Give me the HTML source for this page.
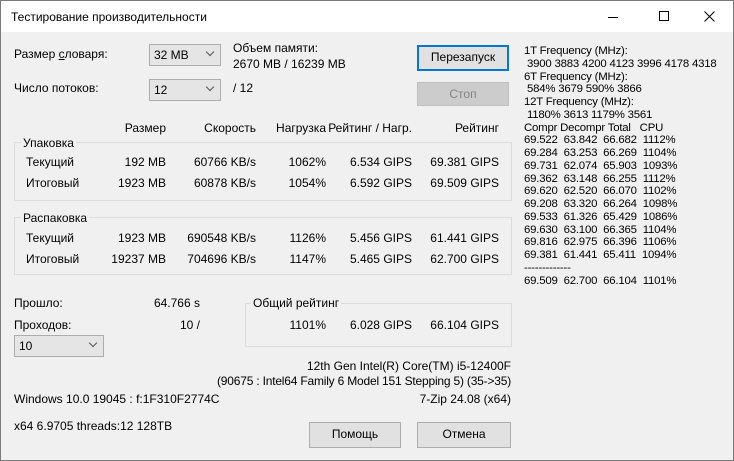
<!DOCTYPE html><html><head><meta charset="utf-8"><style>
*{margin:0;padding:0;box-sizing:border-box}
body{width:734px;height:461px;overflow:hidden;background:#f0f0f0;font-family:"Liberation Sans",sans-serif;font-size:12px;color:#000;position:relative}
.win{position:absolute;left:0;top:0;width:734px;height:461px;border:1px solid #7a7a7a}
.title{position:absolute;left:0;top:0;width:732px;height:31px;background:#fff}
.t{position:absolute;white-space:nowrap;line-height:14px}
.r{text-align:right}
.combo{position:absolute;background:#e5e5e5;border:1px solid #adadad;height:22px}
.combo span{position:absolute;left:4px;top:3px}
.combo i{position:absolute;right:7px;top:4px;width:6px;height:6px;border-right:1px solid #555;border-bottom:1px solid #555;transform:rotate(45deg)}
.btn{position:absolute;background:#e1e1e1;border:1px solid #adadad;text-align:center;line-height:23px}
.grp{position:absolute;border:1px solid #dcdcdc}
.gl{position:absolute;background:#f0f0f0;padding:0 2px;line-height:14px}
</style></head><body><div class="win">
<div class="title"><div class="t" style="left:10px;top:9px;font-size:12px">Тестирование производительности</div>
<div style="position:absolute;left:607px;top:16px;width:10px;height:1px;background:#000"></div>
<div style="position:absolute;left:658px;top:10px;width:10px;height:10px;border:1px solid #000"></div>
<svg style="position:absolute;left:703px;top:10px" width="11" height="11"><path d="M0.5 0.5L10.5 10.5M10.5 0.5L0.5 10.5" stroke="#000" stroke-width="1"/></svg></div>

<div class="t" style="left:13px;top:46px">Размер <u>с</u>ловаря:</div>
<div class="combo" style="left:148px;top:43px;width:72px"><span>32 MB</span><i></i></div>
<div class="t" style="left:232px;top:40px">Объем памяти:</div>
<div class="t" style="left:232px;top:56px">2670 MB / 16239 MB</div>
<div class="t" style="left:13px;top:80px">Число потоков:</div>
<div class="combo" style="left:148px;top:78px;width:72px"><span>12</span><i></i></div>
<div class="t" style="left:232px;top:80px">/ 12</div>
<div class="btn" style="left:416px;top:44px;width:92px;height:26px;border:2px solid #0078d7;line-height:21px">Перезапуск</div>
<div class="btn" style="left:416px;top:81px;width:92px;height:24px;background:#ccc;border-color:#bfbfbf;color:#838383">Стоп</div>

<div class="t r" style="left:95px;width:70px;top:120px">Размер</div>
<div class="t r" style="left:175px;width:80px;top:120px">Скорость</div>
<div class="t r" style="left:255px;width:70px;top:120px">Нагрузка</div>
<div class="t r" style="left:311px;width:100px;top:120px">Рейтинг / Нагр.</div>
<div class="t r" style="left:418px;width:80px;top:120px">Рейтинг</div>

<div class="grp" style="left:13px;top:141px;width:498px;height:59px"></div>
<div class="gl t" style="left:20px;top:135px">Упаковка</div>
<div class="t" style="left:25px;top:154px">Текущий</div>
<div class="t" style="left:25px;top:175px">Итоговый</div>
<div class="t r" style="left:95px;width:70px;top:154px">192 MB</div>
<div class="t r" style="left:95px;width:70px;top:175px">1923 MB</div>
<div class="t r" style="left:155px;width:100px;top:154px">60766 KB/s</div>
<div class="t r" style="left:155px;width:100px;top:175px">60878 KB/s</div>
<div class="t r" style="left:255px;width:70px;top:154px">1062%</div>
<div class="t r" style="left:255px;width:70px;top:175px">1054%</div>
<div class="t r" style="left:311px;width:100px;top:154px">6.534 GIPS</div>
<div class="t r" style="left:311px;width:100px;top:175px">6.592 GIPS</div>
<div class="t r" style="left:398px;width:100px;top:154px">69.381 GIPS</div>
<div class="t r" style="left:398px;width:100px;top:175px">69.509 GIPS</div>

<div class="grp" style="left:13px;top:216px;width:498px;height:58px"></div>
<div class="gl t" style="left:20px;top:210px">Распаковка</div>
<div class="t" style="left:25px;top:230px">Текущий</div>
<div class="t" style="left:25px;top:251px">Итоговый</div>
<div class="t r" style="left:95px;width:70px;top:230px">1923 MB</div>
<div class="t r" style="left:95px;width:70px;top:251px">19237 MB</div>
<div class="t r" style="left:155px;width:100px;top:230px">690548 KB/s</div>
<div class="t r" style="left:155px;width:100px;top:251px">704696 KB/s</div>
<div class="t r" style="left:255px;width:70px;top:230px">1126%</div>
<div class="t r" style="left:255px;width:70px;top:251px">1147%</div>
<div class="t r" style="left:311px;width:100px;top:230px">5.456 GIPS</div>
<div class="t r" style="left:311px;width:100px;top:251px">5.465 GIPS</div>
<div class="t r" style="left:398px;width:100px;top:230px">61.441 GIPS</div>
<div class="t r" style="left:398px;width:100px;top:251px">62.700 GIPS</div>

<div class="t" style="left:523px;top:44px;font-size:11.4px;letter-spacing:-0.2px;line-height:12.75px;white-space:pre">1T Frequency (MHz):
 3900 3883 4200 4123 3996 4178 4318
6T Frequency (MHz):
 584% 3679 590% 3866
12T Frequency (MHz):
 1180% 3613 1179% 3561
Compr Decompr Total   CPU
69.522  63.842  66.682  1112%
69.284  63.253  66.269  1104%
69.731  62.074  65.903  1093%
69.362  63.148  66.255  1112%
69.620  62.520  66.070  1102%
69.208  63.320  66.264  1098%
69.533  61.326  65.429  1086%
69.630  63.100  66.365  1104%
69.816  62.975  66.396  1106%
69.381  61.441  65.411  1094%
-------------
69.509  62.700  66.104  1101%</div>

<div class="t" style="left:13px;top:295px">Прошло:</div>
<div class="t r" style="left:100px;width:99px;top:295px">64.766 s</div>
<div class="t" style="left:13px;top:317px">Проходов:</div>
<div class="t r" style="left:100px;width:99px;top:317px">10 /</div>
<div class="combo" style="left:13px;top:334px;width:90px"><span>10</span><i></i></div>

<div class="grp" style="left:244px;top:302px;width:267px;height:44px"></div>
<div class="gl t" style="left:250px;top:295px">Общий рейтинг</div>
<div class="t r" style="left:255px;width:70px;top:317px">1101%</div>
<div class="t r" style="left:311px;width:100px;top:317px">6.028 GIPS</div>
<div class="t r" style="left:398px;width:100px;top:317px">66.104 GIPS</div>

<div class="t r" style="left:200px;width:310px;top:358px">12th Gen Intel(R) Core(TM) i5-12400F</div>
<div class="t r" style="left:200px;width:310px;top:373px;letter-spacing:-0.2px">(90675 : Intel64 Family 6 Model 151 Stepping 5) (35-&gt;35)</div>
<div class="t r" style="left:300px;width:210px;top:391px">7-Zip 24.08 (x64)</div>
<div class="t" style="left:13px;top:391px">Windows 10.0 19045 : f:1F310F2774C</div>
<div class="t" style="left:13px;top:418px">x64 6.9705 threads:12 128TB</div>
<div class="btn" style="left:308px;top:421px;width:92px;height:26px">Помощь</div>
<div class="btn" style="left:416px;top:421px;width:94px;height:26px">Отмена</div>
</div></body></html>
